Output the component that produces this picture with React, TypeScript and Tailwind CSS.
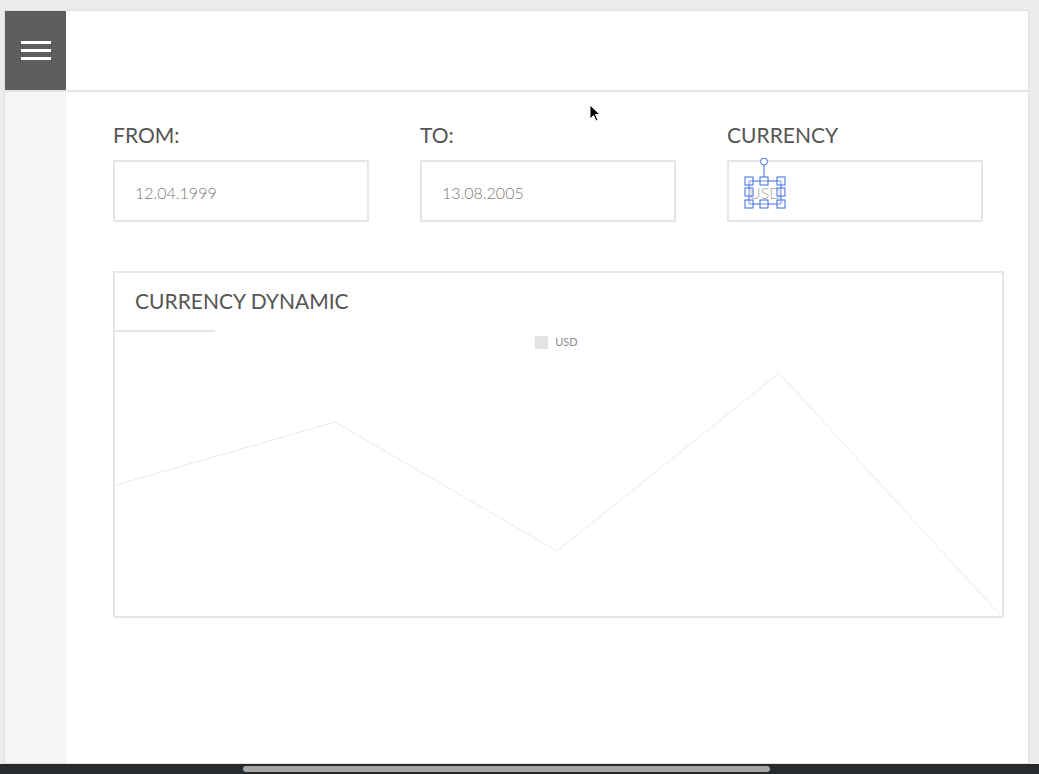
import React from 'react';

const points = [
  [0, 214],
  [222, 150],
  [444, 279],
  [666, 101],
  [888, 344],
];

function Field({ label, value, children }: { label: string; value?: string; children?: React.ReactNode }) {
  return (
    <div className="w-[256px] flex flex-col">
      <div className="h-[28px] text-[21px] leading-[26px] text-[#555555]">{label}</div>
      <div className="relative mt-[10px] h-[62px] border-2 border-[#e6e6e6] flex items-center pl-[20px] pt-[3px] text-[16px] font-light text-[#7a7a7a]">
        {value}
        {children}
      </div>
    </div>
  );
}

function Handles() {
  const xs = [6, 21, 38];
  const ys = [23, 34, 46];
  return (
    <svg className="absolute left-[14px] top-[-4px]" width="48" height="54" viewBox="0 0 48 54" fill="none">
      <line x1="21" y1="7" x2="21" y2="19" stroke="#3d6be6" strokeWidth="1" />
      <circle cx="21" cy="3.5" r="3.5" fill="white" stroke="#3d6be6" strokeWidth="1" />
      <line x1="6" y1="23" x2="38" y2="23" stroke="#3d6be6" strokeWidth="1" />
      <line x1="6" y1="46" x2="38" y2="46" stroke="#3d6be6" strokeWidth="1" />
      <line x1="6" y1="23" x2="6" y2="46" stroke="#3d6be6" strokeWidth="1" />
      <line x1="38" y1="23" x2="38" y2="46" stroke="#3d6be6" strokeWidth="1" />
      {xs.map((x) =>
        ys.map((y) =>
          x === 21 && y === 34 ? null : (
            <rect key={`${x}-${y}`} x={x - 4} y={y - 4} width="8" height="8" fill="white" fillOpacity="0.3" stroke="#3d6be6" strokeWidth="1" />
          )
        )
      )}
    </svg>
  );
}

export default function App() {
  const path = points.map((p) => p.join(',')).join(' ');
  return (
    <div className="relative w-[1039px] h-[774px] bg-[#ececec] overflow-hidden" style={{ fontFamily: 'Lato, "Open Sans", sans-serif' }}>
      <div className="ml-[4px] mt-[10px] w-[1025px] h-[754px] border border-[#e0e0e0] bg-white flex flex-col">
        {/* header */}
        <header className="h-[81px] shrink-0 flex border-b-2 border-[#e3e3e3]">
          <button className="w-[61px] h-full bg-[#5e5e5e] flex flex-col items-center justify-center gap-[5px]">
            <span className="block w-[30px] h-[3px] bg-white" />
            <span className="block w-[30px] h-[3px] bg-white" />
            <span className="block w-[30px] h-[3px] bg-white" />
          </button>
        </header>

        <div className="flex flex-1">
          <aside className="w-[61px] bg-[#f5f5f5]" />
          <main className="flex-1 pl-[47px] pt-[30px]">
            <div className="flex gap-[51px]">
              <Field label="FROM:" value="12.04.1999" />
              <Field label="TO:" value="13.08.2005" />
              <Field label="CURRENCY">
                <span className="text-[#a8a8a8]">USD</span>
                <Handles />
              </Field>
            </div>

            <section className="mt-[49px] w-[891px] h-[347px] border-2 border-[#e6e6e6] flex flex-col">
              <h2 className="pl-[20px] pt-[15px] h-[57px] text-[21px] leading-[26px] text-[#555555]">CURRENCY DYNAMIC</h2>
              <div className="w-[100px] h-[2px] bg-[#e6e6e6]" />
              <div className="flex items-center justify-center gap-[7px] mt-[2px] mr-[4px] text-[11px] text-[#8a8a8a]">
                <span className="block w-[13px] h-[13px] bg-[#e3e3e3]" />
                <span>USD</span>
              </div>
              <svg className="mt-[4px]" width="888" height="257" viewBox="0 0 888 257" style={{ overflow: 'visible' }}>
                <polyline points={path} fill="none" stroke="#e9e9e9" strokeWidth="1" transform="translate(-2,-83)" />
              </svg>
            </section>
          </main>
        </div>
      </div>

      {/* scrollbar */}
      <div className="absolute left-0 bottom-0 w-full h-[10px] bg-[#272b2e]">
        <div className="absolute left-[243px] top-[2px] w-[527px] h-[6px] rounded-full bg-[#a6a6a6]" />
      </div>

      {/* cursor */}
      <svg className="absolute left-[589px] top-[104px]" width="14" height="20" viewBox="0 0 14 20">
        <path d="M1 1 L1 15 L4.5 11.5 L7 17 L9 16 L6.5 10.5 L11 10.5 Z" fill="black" stroke="white" strokeWidth="1" />
      </svg>
    </div>
  );
}
